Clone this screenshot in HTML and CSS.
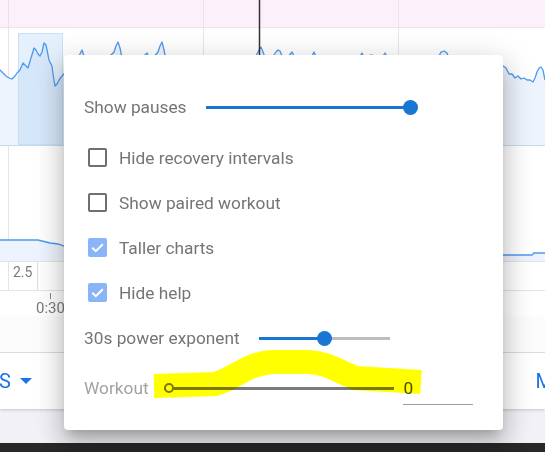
FILE: index.html
```html
<!DOCTYPE html>
<html>
<head>
<meta charset="utf-8">
<title>Chart settings</title>
<link rel="stylesheet" href="styles.css">
</head>
<body>
<div class="page">
  <svg class="charts" width="545" height="262" viewBox="0 0 545 262">
    <rect x="0" y="0" width="545" height="27" fill="#fcf0fb"/>
    <line x1="0" y1="27.5" x2="545" y2="27.5" stroke="#ebe6eb" stroke-width="1"/>
    <line x1="8.5" y1="0" x2="8.5" y2="262" stroke="#e6e2e6" stroke-width="1"/>
    <line x1="203.5" y1="0" x2="203.5" y2="262" stroke="#ebe4eb" stroke-width="1"/>
    <line x1="398.5" y1="0" x2="398.5" y2="262" stroke="#ebe4eb" stroke-width="1"/>
    <polygon fill="#eef4fd" points="0,70 3,73 6,76 9,78 12,79 15,76 17,73 20,70 23,63 26,66 28,68 31,58 34,48 36,50 38,54 40,56 42,52 44,43 46,45 47,50 49,60 52,66 53,74 55,86 57,84 59,80 62,76 64,74 66,72 70,66 74,60 78,58 80,54 82,50 84,56 88,60 95,62 100,60 105,58 110,56 114,52 116,46 118,42 120,48 122,58 130,62 140,60 145,55 147,53 149,57 153,58 158,52 160,46 162,42 164,50 166,60 180,62 200,60 220,62 240,60 255,58 259,50 261,47 263,52 266,60 272,58 276,52 278,50 280,51 282,56 288,57 292,52 294,56 300,60 312,56 314,52 316,57 330,60 345,58 360,56 362,53 364,57 372,55 374,58 383,56 385,53 387,57 400,60 420,62 438,58 441,52 444,51 447,53 449,58 460,62 480,64 500,64 503,66 506,68 509,74 512,74 515,78 518,76 521,79 524,78 527,80 530,80 533,82 535,78 537,72 539,68 541,67 543,70 545,80 545,145 0,145"/>
    <rect x="18.5" y="33.5" width="44" height="111" fill="rgba(120,180,235,0.2)" stroke="#c8e0f6" stroke-width="1"/>
    <line x1="0" y1="145.5" x2="545" y2="145.5" stroke="#c3dcf0" stroke-width="1"/>
    <polyline fill="none" stroke="#4c9aee" stroke-width="1.3" stroke-linejoin="round" points="0,70 3,73 6,76 9,78 12,79 15,76 17,73 20,70 23,63 26,66 28,68 31,58 34,48 36,50 38,54 40,56 42,52 44,43 46,45 47,50 49,60 52,66 53,74 55,86 57,84 59,80 62,76 64,74 66,72 70,66 74,60 78,58 80,54 82,50 84,56 88,60 95,62 100,60 105,58 110,56 114,52 116,46 118,42 120,48 122,58 130,62 140,60 145,55 147,53 149,57 153,58 158,52 160,46 162,42 164,50 166,60 180,62 200,60 220,62 240,60 255,58 259,50 261,47 263,52 266,60 272,58 276,52 278,50 280,51 282,56 288,57 292,52 294,56 300,60 312,56 314,52 316,57 330,60 345,58 360,56 362,53 364,57 372,55 374,58 383,56 385,53 387,57 400,60 420,62 438,58 441,52 444,51 447,53 449,58 460,62 480,64 500,64 503,66 506,68 509,74 512,74 515,78 518,76 521,79 524,78 527,80 530,80 533,82 535,78 537,72 539,68 541,67 543,70 545,80"/>
    <line x1="259.5" y1="0" x2="259.5" y2="62" stroke="#333" stroke-width="1.5"/>
    <polygon fill="#eef4fd" points="0,240 38,240 42,241 50,243 58,244 64,246 100,248 500,255 532,255 534,253 545,253 545,262 0,262"/>
    <polyline fill="none" stroke="#4c9aee" stroke-width="1.3" points="0,240 38,240 42,241 50,243 58,244 64,246 100,248 500,255 532,255 534,253 545,253"/>
    <line x1="0" y1="261.5" x2="545" y2="261.5" stroke="#e4e4e4" stroke-width="1"/>
  </svg>
  <div class="axis1"><div class="ylab">2.5</div></div>
  <div class="axis2"><div class="tick"></div><div class="tlab">0:30</div></div>
  <div class="gap"></div>
  <div class="card">
    <div class="tab tab-left">S<span class="caret"></span></div>
    <div class="tab tab-right">M</div>
  </div>
  <div class="foot"></div>
  <div class="taskbar"></div>
</div>

<div class="menu">
  <div class="row row-first">
    <span class="label">Show pauses</span>
    <div class="slider s1"><span class="thumb"></span></div>
  </div>
  <div class="row cb-row">
    <span class="box"></span><span class="label">Hide recovery intervals</span>
  </div>
  <div class="row cb-row">
    <span class="box"></span><span class="label">Show paired workout</span>
  </div>
  <div class="row cb-row">
    <span class="box box-on"><svg width="19" height="19" viewBox="0 0 19 19"><path d="M4.3 9.8 L7.8 13.2 L14.8 6.2" fill="none" stroke="#fff" stroke-width="2"/></svg></span><span class="label">Taller charts</span>
  </div>
  <div class="row cb-row">
    <span class="box box-on"><svg width="19" height="19" viewBox="0 0 19 19"><path d="M4.3 9.8 L7.8 13.2 L14.8 6.2" fill="none" stroke="#fff" stroke-width="2"/></svg></span><span class="label">Hide help</span>
  </div>
  <div class="row row-tall">
    <span class="label">30s power exponent</span>
    <div class="slider s2"><span class="thumb"></span></div>
  </div>
  <div class="row row-last">
    <span class="label label-dim">Workout</span>
    <div class="slider s3"><span class="hollow"></span></div>
    <div class="val">0</div>
  </div>
</div>

<svg class="marker" width="545" height="452" viewBox="0 0 545 452">
  <path d="M154,386 L215,384 C235,379 245,364 272,362 L308,362 C330,363 340,373 356,378 L421,382" fill="none" stroke="#ffff00" stroke-width="24"/>
</svg>
</body>
</html>
```

FILE: styles.css
```css
* { box-sizing: border-box; }
html, body { margin: 0; padding: 0; }
body {
  width: 545px;
  height: 452px;
  overflow: hidden;
  position: relative;
  background: #fff;
  font-family: Roboto, "Noto Sans", "Liberation Sans", sans-serif;
}
.page { width: 545px; }
.charts { display: block; }

.axis1 {
  height: 29px;
  border-bottom: 1px solid #e4e4e4;
  padding-left: 8px;
  display: flex;
}
.ylab {
  width: 30px;
  border-left: 1px solid #e4e4e4;
  border-right: 1px solid #dcdcdc;
  padding: 2px 0 0 4px;
  font-size: 14px;
  line-height: 16px;
  color: #7a7a7a;
}
.axis2 {
  height: 25px;
  padding-left: 36px;
  display: flex;
  flex-direction: column;
}
.tick { width: 1px; height: 6px; background: #888; margin: 2px 0 0 14px; }
.tlab { font-size: 15px; line-height: 16px; color: #7a7a7a; margin-top: 1px; }

.gap { height: 37px; background: #fcfcfc; border-bottom: 1px solid #e2e2e2; }
.card {
  height: 56px;
  background: #fff;
  box-shadow: 0 1px 3px rgba(0,0,0,.18);
  display: flex;
  justify-content: space-between;
  align-items: center;
  position: relative;
}
.tab { font-size: 20px; color: #1a73e8; display: flex; align-items: center; }
.tab-left { margin-left: -1px; }
.tab-right { margin-right: -8px; }
.caret {
  width: 0; height: 0;
  border-left: 6px solid transparent;
  border-right: 6px solid transparent;
  border-top: 6px solid #1a73e8;
  margin-left: 9px;
}
.foot { height: 34px; background: #f1f1f6; }
.taskbar { height: 9px; background: #282828; }

.menu {
  position: absolute;
  left: 64px;
  top: 55px;
  width: 439px;
  height: 375px;
  background: #fff;
  border-radius: 4px;
  box-shadow: 0 8px 10px -5px rgba(0,0,0,.2), 0 16px 24px 2px rgba(0,0,0,.14), 0 6px 30px 5px rgba(0,0,0,.12);
  padding: 29px 0 0 20px;
  font-size: 17.3px;
  line-height: 20px;
  color: #757575;
}
.row { display: flex; align-items: center; height: 45px; }
.row-first { height: 46px; margin-bottom: 5px; }
.row-tall { height: 46px; }
.row-last { height: 54px; }
.cb-row { padding-left: 4px; }
.label { white-space: nowrap; }
.label-dim { color: #a2a2a2; }
.box {
  flex: none;
  width: 19px;
  height: 19px;
  border: 2px solid #6f6f6f;
  border-radius: 2px;
  margin-right: 12px;
}
.box-on { border: none; background: #8ab4f8; display: flex; }
.box-on svg { display: block; }

.slider { position: relative; flex: none; height: 3px; }
.thumb {
  position: absolute;
  top: 50%;
  width: 15px;
  height: 15px;
  margin-top: -7.5px;
  border-radius: 50%;
  background: #1976d2;
}
.s1 { width: 205px; margin-left: 19px; background: #1976d2; }
.s1 .thumb { right: -7.5px; }
.s2 { width: 131px; margin-left: 19px; background: linear-gradient(to right, #1976d2 0 66px, #bdbdbd 66px); }
.s2 .thumb { left: 58.5px; }
.s3 { width: 230px; margin-left: 15px; height: 3px; background: #7a7a7a; }
.hollow {
  position: absolute;
  left: 0;
  top: 50%;
  width: 10px;
  height: 10px;
  margin-top: -5px;
  border: 2px solid #7a7a7a;
  border-radius: 50%;
  background: #fff;
}
.val {
  flex: none;
  width: 70px;
  margin-left: 9px;
  padding: 7px 0 6px 1px;
  border-bottom: 1px solid #9e9e9e;
  color: #4d4d4d;
}

.marker {
  position: absolute;
  left: 0;
  top: 0;
  pointer-events: none;
  mix-blend-mode: multiply;
}
```
